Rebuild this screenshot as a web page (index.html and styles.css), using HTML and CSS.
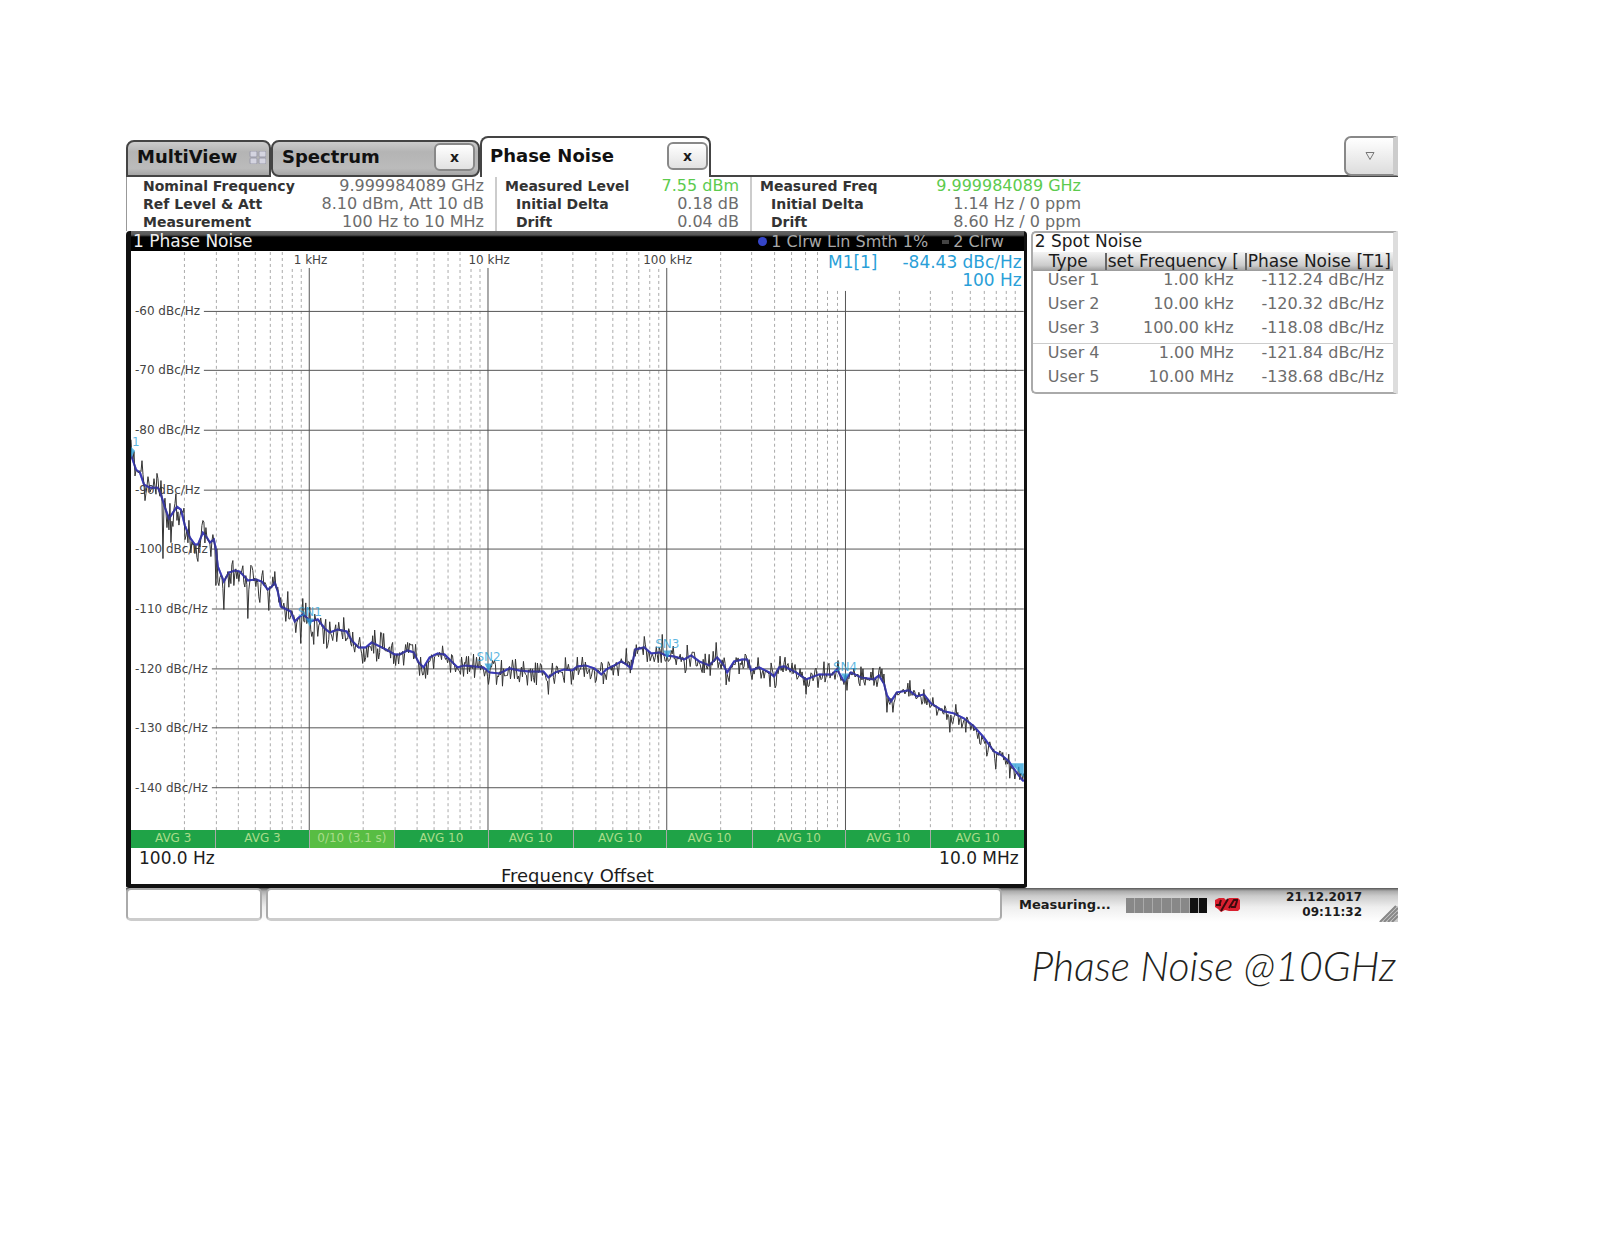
FILE: index.html
```html
<!DOCTYPE html>
<html lang="en">
<head>
    <meta charset="UTF-8">
    <meta name="viewport" content="width=device-width, initial-scale=1.0">
    <title>Phase Noise @10GHz</title>
    <link rel="stylesheet" href="styles.css">
</head>
<body>
    <main class="page">
        <section class="analyzer">
            <nav class="tabs">
                <div class="tab tab-multiview">
                    <button type="button" class="tab-name">MultiView</button>
                    <svg class="grid-icon" width="17" height="13" viewBox="0 0 17 13" aria-hidden="true">
                        <rect x="1" y="0" width="7" height="6" rx="1"/>
                        <rect x="10" y="0" width="7" height="6" rx="1"/>
                        <rect x="1" y="7" width="7" height="6" rx="1"/>
                        <rect x="10" y="7" width="7" height="6" rx="1"/>
                    </svg>
                </div>
                <div class="tab tab-spectrum">
                    <button type="button" class="tab-name">Spectrum</button>
                    <button type="button" class="tab-close" aria-label="Close Spectrum">x</button>
                </div>
                <div class="tab tab-active">
                    <button type="button" class="tab-name">Phase Noise</button>
                    <button type="button" class="tab-close" aria-label="Close Phase Noise">x</button>
                </div>
                <div class="tab-rest">
                    <button type="button" class="tab-menu" aria-label="More tabs">
                        <svg width="10" height="10" viewBox="0 0 10 10" aria-hidden="true"><path d="M1 1.500h8L5 8.500z"/></svg>
                    </button>
                </div>
            </nav>

            <div class="info">
                <dl class="info-group info-nominal">
                    <div><dt>Nominal Frequency</dt><dd>9.999984089 GHz</dd></div>
                    <div><dt>Ref Level &amp; Att</dt><dd>8.10 dBm, Att 10 dB</dd></div>
                    <div><dt>Measurement</dt><dd>100 Hz to 10 MHz</dd></div>
                </dl>
                <dl class="info-group info-level">
                    <div><dt>Measured Level</dt><dd class="good">7.55 dBm</dd></div>
                    <div class="sub"><dt>Initial Delta</dt><dd>0.18 dB</dd></div>
                    <div class="sub"><dt>Drift</dt><dd>0.04 dB</dd></div>
                </dl>
                <dl class="info-group info-freq">
                    <div><dt>Measured Freq</dt><dd class="good">9.999984089 GHz</dd></div>
                    <div class="sub"><dt>Initial Delta</dt><dd>1.14 Hz / 0 ppm</dd></div>
                    <div class="sub"><dt>Drift</dt><dd>8.60 Hz / 0 ppm</dd></div>
                </dl>
            </div>

            <div class="windows">
                <section class="panel">
                    <header class="panel-title">
                        <h2>1 Phase Noise</h2>
                        <div class="traces">
                            <span class="trace"><i class="dot"></i>1 Clrw Lin Smth 1%</span>
                            <span class="trace"><i class="dash"></i>2 Clrw</span>
                        </div>
                    </header>
                    <svg class="plot" id="plot" viewBox="0 0 894 580" role="img" aria-label="Phase noise over frequency offset"></svg>
                    <div class="averages">
                        <span>AVG 3</span>
                        <span>AVG 3</span>
                        <span class="running">0/10 (3.1 s)</span>
                        <span>AVG 10</span>
                        <span>AVG 10</span>
                        <span>AVG 10</span>
                        <span>AVG 10</span>
                        <span>AVG 10</span>
                        <span>AVG 10</span>
                        <span>AVG 10</span>
                    </div>
                    <div class="axis">
                        <span>100.0 Hz</span>
                        <span>10.0 MHz</span>
                    </div>
                    <p class="axis-name">Frequency Offset</p>
                </section>

                <section class="spot">
                    <h2>2 Spot Noise</h2>
                    <table>
                        <thead>
                            <tr><th>Type</th><th><span>set Frequency [</span></th><th><span>Phase Noise [T1]</span></th></tr>
                        </thead>
                        <tbody>
                            <tr><td>User 1</td><td>1.00 kHz</td><td>-112.24 dBc/Hz</td></tr>
                            <tr><td>User 2</td><td>10.00 kHz</td><td>-120.32 dBc/Hz</td></tr>
                            <tr class="ruled"><td>User 3</td><td>100.00 kHz</td><td>-118.08 dBc/Hz</td></tr>
                            <tr><td>User 4</td><td>1.00 MHz</td><td>-121.84 dBc/Hz</td></tr>
                            <tr><td>User 5</td><td>10.00 MHz</td><td>-138.68 dBc/Hz</td></tr>
                        </tbody>
                    </table>
                </section>
            </div>

            <footer class="status">
                <div class="status-box status-short"></div>
                <div class="status-box status-long"></div>
                <div class="status-info">
                    <span class="measuring">Measuring...</span>
                    <span class="progress"><i></i><i></i><i></i><i></i><i></i><i></i><i></i><i class="on"></i><i class="on"></i></span>
                    <svg class="link-icon" width="27" height="16" viewBox="0 0 27 16" aria-hidden="true">
                        <path class="red" d="M1 3l4-2h5l2 2 3-2h9l2 2v9l-2 2h-9l-4-1-4 2-3-3-3-2z"/>
                        <path class="black" d="M2 8h5M7 3L5 9M14 2L7 14M15 11l5-8h4M17 10h4l2-6"/>
                    </svg>
                    <time class="clock" datetime="2017-12-21T09:11:32">21.12.2017<br>09:11:32</time>
                    <svg class="grip" width="19" height="18" viewBox="0 0 19 18" aria-hidden="true">
                        <path class="grip-face" d="M0 18L16 2h3v16z"/>
                        <path d="M1 18L17 2M5 18L19 4M9 18L19 8M13 18l6-6"/>
                    </svg>
                </div>
            </footer>
        </section>
        <p class="caption">Phase Noise @10GHz</p>
    </main>
    <script src="script.js"></script>
</body>
</html>
```

FILE: styles.css
```css
:root {
    --text: #1c1c1c;
    --muted: #6c6c6c;
    --good: #5ccb4e;
    --marker: #2a9fd8;
    --avg: #1fa347;
    --frame: #444;
}

* {
    margin: 0;
    padding: 0;
    box-sizing: border-box;
}

body {
    font-family: "DejaVu Sans", Verdana, sans-serif;
    font-size: 16px;
    line-height: 18px;
    color: var(--text);
    background: #fff;
}

button {
    font: inherit;
    color: inherit;
    cursor: pointer;
}

h2 {
    font-size: 17px;
    font-weight: 400;
}

.page {
    padding: 136px 202px 0 126px;
}

.analyzer {
    overflow: hidden;
}

/* tabs */
.tabs {
    display: flex;
    align-items: flex-end;
    height: 41px;
}

.tab {
    display: flex;
    align-items: center;
    justify-content: space-between;
    height: 37px;
    padding: 0 3px 3px 9px;
    border: 2px solid var(--frame);
    border-radius: 8px 8px 0 0;
    background: linear-gradient(#ccc, #b4b4b4 30%, #bbb 80%, #a5a5a5);
}

.tab-name {
    border: none;
    background: none;
    font-size: 18px;
    font-weight: 700;
    color: #111;
}

.tab-multiview {
    width: 145px;
    border-bottom-left-radius: 0;
}

.tab-spectrum {
    width: 209px;
    border-radius: 8px;
}

.tab-active {
    width: 231px;
    height: 41px;
    padding: 0 1px 4px 8px;
    border-bottom: none;
    background: #fff;
}

.grid-icon {
    fill: #d4d4e0;
    stroke: #9999a8;
    stroke-width: 1;
}

.tab-close {
    width: 41px;
    height: 28px;
    border: 2px solid #888;
    border-radius: 6px;
    background: linear-gradient(#fff, #e2e2e2);
    font-size: 14px;
    font-weight: 700;
    line-height: 14px;
}

.tab-rest {
    display: flex;
    flex: 1;
    justify-content: flex-end;
    height: 41px;
    border-bottom: 2px solid var(--frame);
}

.tab-menu {
    width: 54px;
    height: 40px;
    border: 2px solid #888;
    border-right: 5px solid #ccc;
    border-radius: 7px 0 0 7px;
    background: linear-gradient(#fff, #ddd);
}

.tab-menu path {
    fill: #eee;
    stroke: #777;
    stroke-width: 1;
}

/* measurement info */
.info {
    display: flex;
    height: 54px;
    border-left: 1px solid #999;
}

.info-group {
    padding: 0 11px 0 8px;
    border-right: 2px solid #ccc;
}

.info-group div {
    display: flex;
    justify-content: space-between;
}

.info-group .sub {
    padding-left: 11px;
}

.info-nominal {
    width: 370px;
    padding-left: 16px;
}

.info-level {
    width: 255px;
}

.info-freq {
    width: 340px;
    border-right: none;
}

dt {
    font-size: 14px;
    font-weight: 700;
    color: #333;
}

dd {
    color: var(--muted);
}

dd.good {
    color: var(--good);
}

/* windows */
.windows {
    display: flex;
    align-items: flex-start;
    gap: 4px;
}

.panel {
    flex: 902 1 0;
    border: 0 solid #111;
    border-width: 0 3px 4px 5px;
    border-radius: 4px 4px 3px 3px;
}

.panel-title {
    display: flex;
    justify-content: space-between;
    height: 20px;
    padding: 1px 20px 0 2px;
    background: linear-gradient(#666, #555 4px, #000 6px);
    color: #eee;
}

.traces {
    display: flex;
    gap: 14px;
    color: #a8a8a8;
}

.trace {
    display: flex;
    align-items: center;
    gap: 4px;
}

.dot {
    width: 9px;
    height: 9px;
    border-radius: 50%;
    background: #3545c8;
}

.dash {
    width: 7px;
    height: 4px;
    background: #444;
}

.plot {
    display: block;
    width: 100%;
    height: auto;
    font-size: 12px;
}

.minor {
    stroke: #aaa;
    stroke-width: 1;
    stroke-dasharray: 3 3;
}

.major {
    stroke: #555;
    stroke-width: 1;
}

.grid-label {
    fill: #444;
}

.raw {
    fill: none;
    stroke: #333;
    stroke-width: 1;
}

.smooth {
    fill: none;
    stroke: #3a3ab8;
    stroke-width: 2;
}

.marker {
    fill: var(--marker);
    fill-opacity: 0.75;
}

.readout {
    fill: var(--marker);
    font-size: 17px;
}

.averages {
    display: flex;
    height: 18px;
    font-size: 12px;
    line-height: 16px;
    text-align: center;
    color: #a9dc8a;
}

.averages span {
    flex: 477 1 0;
    background: var(--avg);
    border-right: 1px solid #a9a9a9;
    white-space: nowrap;
    overflow: hidden;
}

.averages span:nth-child(even) {
    flex-grow: 523;
}

.averages span:last-child {
    border-right: none;
}

.averages .running {
    background: #58bd43;
}

.axis {
    display: flex;
    justify-content: space-between;
    padding: 1px 5px 0 8px;
    font-size: 17px;
}

.axis-name {
    font-size: 18px;
    line-height: 17px;
    text-align: center;
}

/* spot noise list */
.spot {
    flex: 364 1 0;
    border: 2px solid #aaa;
    border-right: 5px solid #ddd;
    border-radius: 5px 0 0 5px;
}

.spot h2 {
    height: 19px;
    padding-left: 2px;
    line-height: 17px;
}

.spot table {
    width: 100%;
    table-layout: fixed;
    border-collapse: collapse;
}

.spot th {
    height: 19px;
    background: linear-gradient(#f4f4f4, #ccc 70%, #999);
    font-size: 17px;
    font-weight: 400;
    line-height: 17px;
    text-align: left;
    white-space: nowrap;
    overflow: hidden;
}

.spot th:first-child {
    width: 72px;
    padding-left: 16px;
}

.spot th:nth-child(2) {
    width: 140px;
}

.spot th span {
    display: block;
    padding-left: 1px;
    border-left: 2px solid #666;
    overflow: hidden;
}

.spot td {
    height: 24px;
    padding-bottom: 6px;
    color: var(--muted);
    text-align: right;
    line-height: 18px;
    white-space: nowrap;
}

.spot td:first-child {
    padding-left: 15px;
    text-align: left;
}

.spot td:nth-child(2) {
    padding-right: 11px;
}

.spot td:last-child {
    padding-right: 9px;
}

.spot .ruled td {
    border-bottom: 1px solid #ccc;
}

/* status bar */
.status {
    display: flex;
    height: 34px;
    background: linear-gradient(#555, #aaa 3px, #ccc 8px, #eee 19px, #fff);
}

.status-box {
    height: 33px;
    margin-right: 4px;
    border: 2px solid #aaa;
    border-bottom: 3px solid #ccc;
    border-radius: 5px;
    background: #fff;
}

.status-short {
    width: 136px;
}

.status-long {
    flex: 1;
    margin-right: 0;
}

.status-info {
    display: flex;
    align-items: center;
    width: 396px;
    padding-left: 17px;
    font-size: 13px;
    font-weight: 700;
}

.measuring {
    width: 107px;
}

.progress {
    display: flex;
    width: 81px;
    height: 15px;
    gap: 1px;
    background: #aaa;
}

.progress i {
    flex: 1;
    background: #888;
}

.progress .on {
    background: #111;
}

.link-icon {
    margin-left: 7px;
}

.link-icon .red {
    fill: #d9202f;
}

.link-icon .black {
    fill: none;
    stroke: #3c0a0e;
    stroke-width: 2;
}

.clock {
    flex: 1;
    padding-right: 17px;
    font-size: 12px;
    line-height: 15px;
    text-align: right;
}

.grip {
    align-self: flex-end;
    fill: none;
    stroke: #888;
    stroke-width: 2;
}

.grip-face {
    fill: #ccc;
    stroke: none;
}

.caption {
    padding-right: 2px;
    margin-top: 20px;
    font-family: Lato, sans-serif;
    font-size: 41px;
    font-style: italic;
    font-weight: 300;
    line-height: 48px;
    text-align: right;
    color: #231f20;
}
```

FILE: script.js
```js
const plot = document.getElementById('plot');
const NS = 'http://www.w3.org/2000/svg';
const WIDTH = 894;
const HEIGHT = 580;
const DECADE = WIDTH / 5;

// smoothed trace, x/y in plot units
const smooth = [
    [0,204],[5,219],[9,222],[13,234],[19,237],[27,237],[30,244],[34,257],[38,268],[42,262],[46,256],[50,259],
    [54,275],[59,287],[64,294],[67,294],[72,282],[76,287],[79,292],[83,289],[85,299],[87,316],[93,331],[98,322],
    [104,320],[109,321],[117,330],[125,329],[131,331],[137,339],[141,336],[144,332],[147,341],[150,356],[156,359],
    [160,361],[164,371],[168,367],[172,364],[176,367],[179,371],[187,369],[194,378],[199,382],[207,379],[216,381],
    [221,390],[228,397],[235,397],[241,392],[249,396],[257,400],[264,404],[269,404],[277,400],[283,402],[288,412],
    [293,417],[299,407],[307,403],[314,404],[319,409],[327,417],[334,415],[344,416],[353,417],[359,422],[369,423],
    [379,418],[389,420],[399,421],[413,421],[418,427],[425,422],[434,419],[442,420],[447,416],[455,415],[464,418],
    [471,424],[476,419],[484,415],[491,411],[496,414],[501,418],[505,399],[514,397],[521,403],[529,402],[536,405],
    [544,406],[554,409],[561,405],[569,411],[579,415],[587,407],[593,414],[597,422],[604,411],[612,409],[617,409],
    [621,420],[629,417],[639,422],[644,426],[649,417],[654,416],[666,422],[676,429],[689,424],[702,424],[707,419],
    [714,431],[721,422],[731,427],[744,429],[749,425],[754,433],[757,445],[761,451],[767,442],[779,440],[787,446],
    [794,444],[801,453],[814,461],[824,463],[834,468],[844,476],[854,487],[864,501],[872,505],[879,511],[886,521],
    [892,529],[894,531]
];

// single peaks and dips of the raw trace
const spikes = {
    11: 210, 14: 250, 23: 228, 27: 228, 32: 308, 40: 292, 45: 243, 52: 262, 66: 307, 71: 275, 80: 306, 85: 335,
    93: 359, 102: 310, 117: 368, 122: 320, 129: 352, 132: 320, 138: 360, 144: 321, 157: 341, 170: 393, 172: 348,
    183: 394, 196: 398, 277: 392, 295: 428, 418: 444, 441: 434, 496: 398, 514: 386, 532: 384, 586: 392, 676: 444,
    717: 440, 757: 462, 763: 462, 780: 430, 820: 482, 826: 454, 836: 482, 857: 506, 866: 519, 880: 528
};

function add(name, attrs, text) {
    const el = document.createElementNS(NS, name);
    for (const key in attrs) el.setAttribute(key, attrs[key]);
    if (text) el.textContent = text;
    plot.appendChild(el);
}

function line(cls, x1, y1, x2, y2) {
    add('line', { class: cls, x1, y1, x2, y2 });
}

function snap(v) {
    return Math.floor(v) + 0.5;
}

// frequency grid
for (let d = 0; d < 5; d++) {
    for (let k = 2; k < 10; k++) {
        const x = snap((d + Math.log10(k)) * DECADE);
        line('minor', x, x > 697 ? 40 : k > 7 ? 18 : 1, x, HEIGHT);
    }
    if (d > 0) line('major', snap(d * DECADE), d === 4 ? 40 : 17, snap(d * DECADE), HEIGHT);
}
['1 kHz', '10 kHz', '100 kHz'].forEach((label, i) => {
    add('text', { class: 'grid-label', x: (i + 1) * DECADE + 1, y: 13, 'text-anchor': 'middle' }, label);
});

// level grid
for (let i = 0; i < 9; i++) {
    const level = -60 - i * 10;
    const y = snap(60 + i * 59.7);
    line('major', level > -100 ? 73 : 81, y, WIDTH, y);
    add('text', { class: 'grid-label', x: 4, y: y + 4 }, level + ' dBc/Hz');
}

// raw trace: smoothed level with repeatable noise on it
let seed = 11;
function random() {
    seed = (seed * 16807) % 2147483647;
    return seed / 2147483647;
}

function levelAt(x) {
    let i = 1;
    while (i < smooth.length - 1 && smooth[i][0] < x) i++;
    const [x0, y0] = smooth[i - 1];
    const [x1, y1] = smooth[i];
    return y0 + (y1 - y0) * (x - x0) / (x1 - x0);
}

const raw = [];
for (let x = 0; x <= WIDTH; x++) {
    const size = x < 260 ? 16 : x < 760 ? 14 : 10;
    const r = random() * 2 - 1;
    const noise = r * Math.abs(r) * size + 1;
    raw.push(x + ',' + (spikes[x] || levelAt(x) + noise).toFixed(1));
}
add('polyline', { class: 'smooth', points: smooth.join(' ') });
add('polyline', { class: 'raw', points: raw.join(' ') });
add('polyline', { class: 'smooth', points: smooth.join(' '), 'stroke-opacity': 0.6 });

// markers
add('text', { class: 'marker', x: 1, y: 195 }, '1');
add('path', { class: 'marker', d: 'M0 196l4 4-4 7z' });
[[179, 366], [358, 411], [537, 398], [715, 421]].forEach(([x, y], i) => {
    add('text', { class: 'marker', x, y, 'text-anchor': 'middle' }, 'SN' + (i + 1));
    add('path', { class: 'marker', d: `M${x - 4} ${y + 2}h8l-4 8z` });
});
add('path', { class: 'marker', d: 'M881 513h13v14z' });

add('text', { class: 'readout', x: 698, y: 17 }, 'M1[1]');
add('text', { class: 'readout', x: 892, y: 17, 'text-anchor': 'end' }, '-84.43 dBc/Hz');
add('text', { class: 'readout', x: 892, y: 35, 'text-anchor': 'end' }, '100 Hz');
```
